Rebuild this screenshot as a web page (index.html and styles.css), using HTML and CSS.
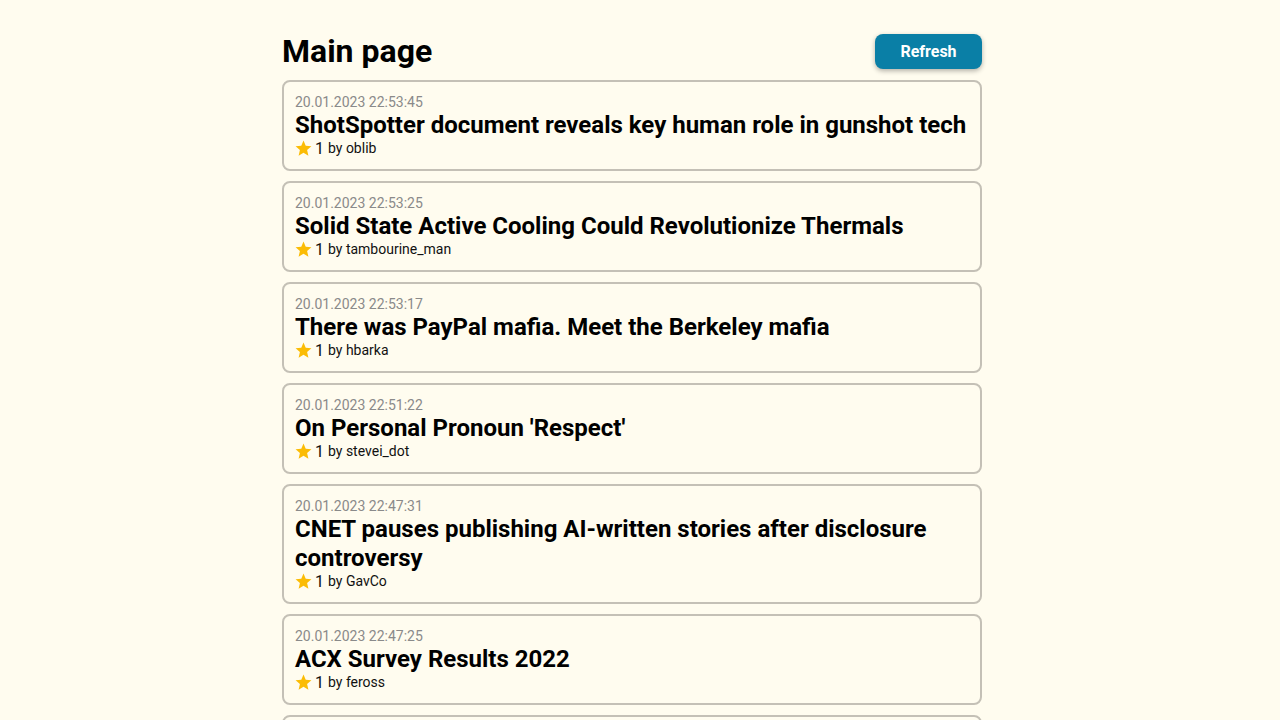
FILE: index.html
```html
<!DOCTYPE html>
<html lang="en">
<head>
<meta charset="utf-8">
<title>Main page</title>
<link rel="stylesheet" href="styles.css">
</head>
<body>
<div class="page">
  <header class="header">
    <h1 class="title">Main page</h1>
    <button class="refresh">Refresh</button>
  </header>
  <main class="list">
    <article class="card">
      <div class="date">20.01.2023 22:53:45</div>
      <h2 class="headline">ShotSpotter document reveals key human role in gunshot tech</h2>
      <div class="meta"><svg class="star" viewBox="0 0 24 24"><path d="M12 17.27L18.18 21l-1.64-7.03L22 9.24l-7.19-.61L12 2 9.19 8.63 2 9.24l5.46 4.73L5.82 21z"/></svg><span class="score">1</span><span class="by">by oblib</span></div>
    </article>
    <article class="card">
      <div class="date">20.01.2023 22:53:25</div>
      <h2 class="headline">Solid State Active Cooling Could Revolutionize Thermals</h2>
      <div class="meta"><svg class="star" viewBox="0 0 24 24"><path d="M12 17.27L18.18 21l-1.64-7.03L22 9.24l-7.19-.61L12 2 9.19 8.63 2 9.24l5.46 4.73L5.82 21z"/></svg><span class="score">1</span><span class="by">by tambourine_man</span></div>
    </article>
    <article class="card">
      <div class="date">20.01.2023 22:53:17</div>
      <h2 class="headline">There was PayPal mafia. Meet the Berkeley mafia</h2>
      <div class="meta"><svg class="star" viewBox="0 0 24 24"><path d="M12 17.27L18.18 21l-1.64-7.03L22 9.24l-7.19-.61L12 2 9.19 8.63 2 9.24l5.46 4.73L5.82 21z"/></svg><span class="score">1</span><span class="by">by hbarka</span></div>
    </article>
    <article class="card">
      <div class="date">20.01.2023 22:51:22</div>
      <h2 class="headline">On Personal Pronoun 'Respect'</h2>
      <div class="meta"><svg class="star" viewBox="0 0 24 24"><path d="M12 17.27L18.18 21l-1.64-7.03L22 9.24l-7.19-.61L12 2 9.19 8.63 2 9.24l5.46 4.73L5.82 21z"/></svg><span class="score">1</span><span class="by">by stevei_dot</span></div>
    </article>
    <article class="card">
      <div class="date">20.01.2023 22:47:31</div>
      <h2 class="headline">CNET pauses publishing AI-written stories after disclosure controversy</h2>
      <div class="meta"><svg class="star" viewBox="0 0 24 24"><path d="M12 17.27L18.18 21l-1.64-7.03L22 9.24l-7.19-.61L12 2 9.19 8.63 2 9.24l5.46 4.73L5.82 21z"/></svg><span class="score">1</span><span class="by">by GavCo</span></div>
    </article>
    <article class="card">
      <div class="date">20.01.2023 22:47:25</div>
      <h2 class="headline">ACX Survey Results 2022</h2>
      <div class="meta"><svg class="star" viewBox="0 0 24 24"><path d="M12 17.27L18.18 21l-1.64-7.03L22 9.24l-7.19-.61L12 2 9.19 8.63 2 9.24l5.46 4.73L5.82 21z"/></svg><span class="score">1</span><span class="by">by feross</span></div>
    </article>
    <article class="card">
      <div class="date">20.01.2023 22:45:10</div>
      <h2 class="headline">Show HN: A new way to browse the web</h2>
      <div class="meta"><svg class="star" viewBox="0 0 24 24"><path d="M12 17.27L18.18 21l-1.64-7.03L22 9.24l-7.19-.61L12 2 9.19 8.63 2 9.24l5.46 4.73L5.82 21z"/></svg><span class="score">1</span><span class="by">by someone</span></div>
    </article>
  </main>
</div>
</body>
</html>
```
FILE: styles.css
```css
html, body {
  margin: 0;
  padding: 0;
  background: #fffcef;
  font-family: Roboto, "Liberation Sans", sans-serif;
  color: #000;
}
body {
  padding-right: 16px;
  overflow: hidden;
}
.page {
  width: 700px;
  margin: 0 auto;
  padding-top: 34px;
}
.header {
  display: flex;
  align-items: center;
  justify-content: space-between;
  height: 35px;
  margin-bottom: 11px;
}
.title {
  margin: 0;
  font-size: 32px;
  font-weight: 700;
  line-height: 35px;
}
.refresh {
  width: 107px;
  height: 35px;
  border: none;
  border-radius: 8px;
  background: #0a7fa6;
  color: #fff;
  font-family: Roboto, "Liberation Sans", sans-serif;
  font-size: 16px;
  font-weight: 700;
  box-shadow: 0 2px 5px rgba(0, 0, 0, 0.3);
  cursor: pointer;
}
.list {
  display: flex;
  flex-direction: column;
  gap: 10px;
}
.card {
  border: 2px solid #c4c0b6;
  border-radius: 8px;
  padding: 12px 11px 12px;
}
.date {
  font-size: 14px;
  line-height: 16px;
  color: #8a8a8a;
}
.headline {
  margin: 1px 0 0;
  font-size: 24px;
  font-weight: 700;
  line-height: 29px;
}
.meta {
  display: flex;
  align-items: center;
  height: 18px;
  margin-top: -1px;
  font-size: 14px;
  color: #111;
}
.star {
  width: 19px;
  height: 19px;
  fill: #fbbc05;
  margin-left: -1px;
  margin-right: 2px;
}
.score {
  font-size: 16px;
  margin-right: 4px;
}
```
